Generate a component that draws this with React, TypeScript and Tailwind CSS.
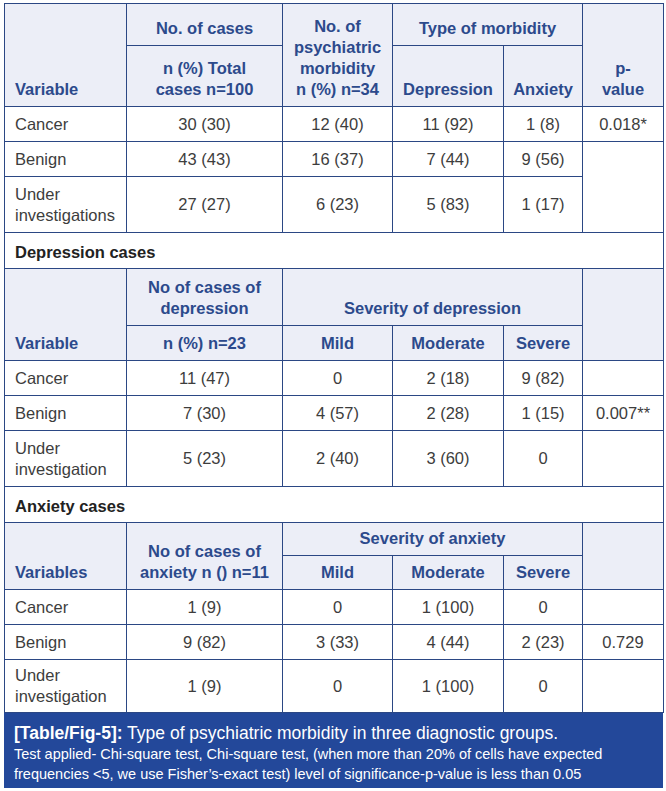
import React from 'react'

const border = 'border border-[#2b4784]'
const th = `${border} bg-[#eceef7] text-[#2c4a8c] font-bold align-bottom pb-[6px] px-1 leading-[21px] text-center`
const thLeft = `${border} bg-[#eceef7] text-[#2c4a8c] font-bold align-bottom pb-[6px] pl-[10px] leading-[21px] text-left`
const td = `${border} text-center align-middle leading-[21px] text-[#3d3d3d]`
const tdLeft = `${border} text-left align-middle leading-[21px] pl-[10px] text-[#3d3d3d]`

type Row = [string, string, string, string, string]

const BodyRows = ({
  rows,
  pRow,
  p,
  merged,
  tallH = 'h-[56px]',
}: {
  rows: Row[]
  pRow: number
  p: string
  merged?: boolean
  tallH?: string
}) => (
  <>
    {rows.map((r, i) => {
      const tall = r[0].startsWith('Under')
      return (
        <tr key={r[0]} className={tall ? tallH : 'h-[35px]'}>
          <td className={tdLeft}>
            {tall ? (
              <>
                Under
                <br />
                {r[0].replace('Under ', '')}
              </>
            ) : (
              r[0]
            )}
          </td>
          <td className={td}>{r[1]}</td>
          <td className={td}>{r[2]}</td>
          <td className={td}>{r[3]}</td>
          <td className={td}>{r[4]}</td>
          {merged ? (
            i === 0 ? (
              <td className={td}>{p}</td>
            ) : i === 1 ? (
              <td className={td} rowSpan={2}></td>
            ) : null
          ) : (
            <td className={td}>{i === pRow ? p : ''}</td>
          )}
        </tr>
      )
    })}
  </>
)

const Section = ({ title }: { title: string }) => (
  <tr className="h-[36px]">
    <td colSpan={6} className={`${border} pl-[10px] pt-[3px] text-left font-semibold text-[#222]`}>
      {title}
    </td>
  </tr>
)

const App: React.FC = () => {
  return (
    <div className="min-h-screen bg-white pl-[4px] pt-[3px] font-['Liberation_Sans',Arial,sans-serif] text-[16.5px]">
      <div className="w-[659px]">
        <table className="w-full table-fixed border-collapse">
          <colgroup>
            <col className="w-[122px]" />
            <col className="w-[156px]" />
            <col className="w-[110px]" />
            <col className="w-[111px]" />
            <col className="w-[79px]" />
            <col className="w-[81px]" />
          </colgroup>
          <tbody>
            {/* Table 1: all cases */}
            <tr className="h-[42px]">
              <th rowSpan={2} className={thLeft}>Variable</th>
              <th className={th}>No. of cases</th>
              <th rowSpan={2} className={th}>
                No. of
                <br />
                psychiatric
                <br />
                morbidity
                <br />
                n (%) n=34
              </th>
              <th colSpan={2} className={th}>Type of morbidity</th>
              <th rowSpan={2} className={th}>
                p-
                <br />
                value
              </th>
            </tr>
            <tr className="h-[61px]">
              <th className={th}>
                n (%) Total
                <br />
                cases n=100
              </th>
              <th className={th}>Depression</th>
              <th className={th}>Anxiety</th>
            </tr>
            <BodyRows
              merged
              pRow={0}
              p="0.018*"
              rows={[
                ['Cancer', '30 (30)', '12 (40)', '11 (92)', '1 (8)'],
                ['Benign', '43 (43)', '16 (37)', '7 (44)', '9 (56)'],
                ['Under investigations', '27 (27)', '6 (23)', '5 (83)', '1 (17)'],
              ]}
            />

            {/* Depression cases */}
            <Section title="Depression cases" />
            <tr className="h-[57px]">
              <th rowSpan={2} className={thLeft}>Variable</th>
              <th className={th}>
                No of cases of
                <br />
                depression
              </th>
              <th colSpan={3} className={th}>Severity of depression</th>
              <th rowSpan={2} className={th}></th>
            </tr>
            <tr className="h-[35px]">
              <th className={th}>n (%) n=23</th>
              <th className={th}>Mild</th>
              <th className={th}>Moderate</th>
              <th className={th}>Severe</th>
            </tr>
            <BodyRows
              pRow={1}
              p="0.007**"
              rows={[
                ['Cancer', '11 (47)', '0', '2 (18)', '9 (82)'],
                ['Benign', '7 (30)', '4 (57)', '2 (28)', '1 (15)'],
                ['Under investigation', '5 (23)', '2 (40)', '3 (60)', '0'],
              ]}
            />

            {/* Anxiety cases */}
            <Section title="Anxiety cases" />
            <tr className="h-[33px]">
              <th rowSpan={2} className={thLeft}>Variables</th>
              <th rowSpan={2} className={th}>
                No of cases of
                <br />
                anxiety n () n=11
              </th>
              <th colSpan={3} className={th}>Severity of anxiety</th>
              <th rowSpan={2} className={th}></th>
            </tr>
            <tr className="h-[34px]">
              <th className={th}>Mild</th>
              <th className={th}>Moderate</th>
              <th className={th}>Severe</th>
            </tr>
            <BodyRows
              pRow={1}
              p="0.729"
              tallH="h-[53px]"
              rows={[
                ['Cancer', '1 (9)', '0', '1 (100)', '0'],
                ['Benign', '9 (82)', '3 (33)', '4 (44)', '2 (23)'],
                ['Under investigation', '1 (9)', '0', '1 (100)', '0'],
              ]}
            />
          </tbody>
        </table>

        {/* Caption */}
        <div className="bg-[#23489a] px-[10px] pt-[9px] pb-[4px] text-white">
          <p className="text-[17.5px] leading-[22px]">
            <span className="font-bold">[Table/Fig-5]:</span> Type of psychiatric morbidity in three diagnostic groups.
          </p>
          <p className="text-[14.5px] leading-[20px]">
            Test applied- Chi-square test, Chi-square test, (when more than 20% of cells have expected
            <br />
            frequencies &lt;5, we use Fisher’s-exact test) level of significance-p-value is less than 0.05
          </p>
        </div>
      </div>
    </div>
  )
}

export default App
